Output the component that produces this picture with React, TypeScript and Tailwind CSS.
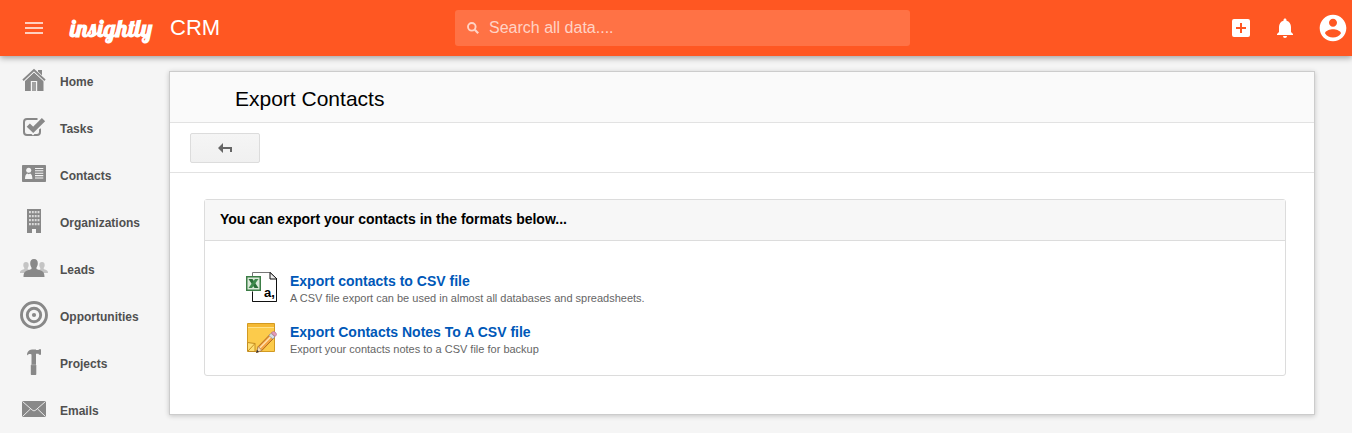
import type { ReactNode } from "react";

const Svg = ({ className, box = "0 0 24 24", children }: { className: string; box?: string; children: ReactNode }) => (
  <svg className={className} viewBox={box} fill="currentColor" aria-hidden="true">
    {children}
  </svg>
);

const HomeIcon = () => (
  <>
    <path d="M18 4h4v7l-4-4z" />
    <path d="M14 6.500 5 15v10h18.500V15z" />
    <path d="M3 14.300 14 4l11 10.300" fill="none" stroke="#f5f5f5" strokeWidth="3.200" />
    <path d="M3 14.300 14 4l11 10.300" fill="none" stroke="currentColor" strokeWidth="1.900" />
    <path d="M10.800 25V15h6.400v10" fill="#f5f5f5" />
    <path d="M12 25v-9h4v9z" fill="#a2a2a2" />
  </>
);

const TasksIcon = () => (
  <>
    <path
      d="M17.500 6H7a3 3 0 0 0-3 3v10a3 3 0 0 0 3 3h10a3 3 0 0 0 3-3v-3.500"
      fill="none"
      stroke="currentColor"
      strokeWidth="2"
    />
    <path d="m8 13.300 5 5L24 7.300" fill="none" stroke="#f5f5f5" strokeWidth="6" />
    <path d="m8.300 12.200 4.900 4.700L23.500 6.700" fill="none" stroke="currentColor" strokeWidth="4.600" />
  </>
);

const ContactsIcon = () => (
  <>
    <rect x="2" y="5" width="24" height="17" rx=".8" />
    <circle cx="8.700" cy="10.300" r="2.500" fill="#f5f5f5" />
    <path d="M5 19c0-3 .8-5 2.200-5.500l1.500.8 1.500-.8c1.400.5 2.200 2.500 2.200 5.500z" fill="#f5f5f5" />
    <path d="M15 8.500h8.300M15 10.800h8.300M15 13.200h8.300M15 15.600h8.300M15 18h8.300" stroke="#f5f5f5" strokeWidth="1.100" />
  </>
);

const OrganizationsIcon = () => (
  <>
    <path d="M7 2h14v24h-5v-4h-4v4H7z" />
    <path d="M9 5.200h10.500M9 9.200h10.500M9 13.200h10.500M9 17.200h10.500" stroke="#dadada" strokeWidth="2.200" strokeDasharray="1.900 .95" />
  </>
);

const LeadsIcon = () => (
  <>
    <g fill="#c4c4c4">
      <path d="M6 8c1.800 0 2.700 1.300 2.700 3.100 0 1.600-.5 2.300-1 3v1.200c1.600.8 4 1.200 4 3V19H0c0-2.300 1-2.800 4.300-4v-1c-.6-.7-1-1.400-1-2.900C3.300 9.300 4.200 8 6 8z" />
      <path d="M22 8c1.800 0 2.700 1.300 2.700 3.100 0 1.500-.4 2.200-1 2.900v1c3.300 1.200 4.300 1.700 4.300 4H16.300v-.7c0-1.800 2.400-2.200 4-3v-1.200c-.5-.7-1-1.400-1-3C19.300 9.300 20.200 8 22 8z" />
    </g>
    <path d="M14 5c2.700 0 3.800 1.700 3.800 4.300 0 2.200-.7 3.200-1.300 4.200V15c5.500 2 8 2 8 8h-21c0-6 2.500-6 8-8v-1.500c-.6-1-1.300-2-1.300-4.200C10.200 6.700 11.300 5 14 5z" />
  </>
);

const OpportunitiesIcon = () => (
  <>
    <circle cx="14" cy="14" r="12.500" fill="none" stroke="currentColor" strokeWidth="2.900" />
    <circle cx="14" cy="14" r="6.700" fill="none" stroke="currentColor" strokeWidth="2.900" />
    <circle cx="14" cy="14" r="2.100" />
  </>
);

const ProjectsIcon = () => (
  <>
    <path d="M7 7.500C7 3.500 9 2 12 1.500h4V2h2.500l.5-.8h2v5.600h-2l-.5-1H16V17h.3v9c0 .8-.4 1-1 1h-3.600c-.6 0-.9-.2-.9-1v-9h.7V6.500C9.500 5.600 8.500 6 7 7.500z" />
    <path d="M11 16.800h5" stroke="#b5b5b5" strokeWidth=".7" />
  </>
);

const EmailsIcon = () => (
  <>
    <rect x="2" y="6" width="24" height="16" rx=".8" />
    <path d="m2.500 6.500 9.700 8.500c1.200 1 2.400 1 3.600 0l9.700-8.500M2.500 21.500l8-7.600M25.500 21.500l-8-7.600" fill="none" stroke="#f5f5f5" strokeWidth=".9" />
  </>
);

const nav = [
  { label: "Home", Icon: HomeIcon },
  { label: "Tasks", Icon: TasksIcon },
  { label: "Contacts", Icon: ContactsIcon },
  { label: "Organizations", Icon: OrganizationsIcon },
  { label: "Leads", Icon: LeadsIcon },
  { label: "Opportunities", Icon: OpportunitiesIcon },
  { label: "Projects", Icon: ProjectsIcon },
  { label: "Emails", Icon: EmailsIcon },
];

const CsvIcon = () => (
  <svg className="size-8 shrink-0" viewBox="0 0 32 32" aria-hidden="true">
    <path d="M6.500.5h18l6 6v23h-24z" fill="#fff" stroke="#777" />
    <path d="M30.500 6v23.500h-24V20" fill="none" stroke="#111" />
    <path d="M24 .5v6.500h7z" fill="#eee" stroke="#111" />
    <rect x="0" y="4" width="15" height="15" fill="#3c7d46" />
    <rect x="1.500" y="5.500" width="12" height="12" fill="#dbe9d9" />
    <path d="M2.500 7h4l6 9h-4z" fill="#2b6e37" />
    <path d="M12.500 7h-3.500l-6.500 9H6z" fill="#3f8a4c" />
    <text x="18" y="25" fontFamily="Liberation Sans, sans-serif" fontWeight="700" fontSize="13" fill="#000">
      a,
    </text>
  </svg>
);

const NotesIcon = () => (
  <svg className="size-8 shrink-0" viewBox="0 2 32 32" aria-hidden="true">
    <path d="M1.500 2.500h27v28h-20l-7-7z" fill="#fccb4b" stroke="#d29a22" />
    <path d="M2 3h26v3H2z" fill="#f5b934" />
    <path d="M2 6.500h26" stroke="#ffe28a" />
    <path d="M1.500 21.500 9 22.500v8H1.500z" fill="#ffdf73" stroke="#c58e20" />
    <path d="m2 30 7-7.500" stroke="#c58e20" />
    <path d="m10.500 31.500 1.800-6L24.500 13l3.800 3.500-12.500 13z" fill="#f4a340" stroke="#a8621c" strokeWidth=".9" />
    <path d="m13.800 27 12.200-12.500" stroke="#ffe0ae" strokeWidth="1.500" />
    <path d="m10.500 31.500 1.800-6 3.500 4z" fill="#f6dfbd" stroke="#9a7448" strokeWidth=".6" />
    <path d="m10.200 31.800.9-3 1.900 1.900z" fill="#333" />
    <path d="m23 14.500 2-2.200 3.900 3.500-2 2.200z" fill="#d8dfe8" stroke="#8292aa" strokeWidth=".6" />
    <path d="m25.300 12 1-1c1.800-1.600 5.300 1.600 3.800 3.400l-1 1.100z" fill="#e39bbb" stroke="#aa6588" strokeWidth=".6" />
  </svg>
);

const exportsList = [
  {
    title: "Export contacts to CSV file",
    text: "A CSV file export can be used in almost all databases and spreadsheets.",
    Icon: CsvIcon,
  },
  {
    title: "Export Contacts Notes To A CSV file",
    text: "Export your contacts notes to a CSV file for backup",
    Icon: NotesIcon,
  },
];

function TopBar() {
  return (
    <header className="relative grid h-14 grid-cols-[455px_minmax(0,455px)_1fr] items-center bg-[#ff5722] text-white shadow-[0_2px_6px_rgba(0,0,0,0.35)]">
      <div className="flex items-center pl-[22px]">
        <button type="button" aria-label="Menu" className="text-[#ffd0c0]">
          <Svg className="size-6">
            <path d="M3 18h18v-2H3v2zm0-5h18v-2H3v2zm0-7v2h18V6H3z" />
          </Svg>
        </button>
        <a href="#home" className="flex items-center pl-6">
          <span className="w-[100px] font-['Lobster','Liberation_Serif',serif] text-[24px] leading-8 font-bold">insightly</span>
          <span className="text-[22px] leading-8">CRM</span>
        </a>
      </div>
      <label className="flex h-9 items-center gap-2.5 rounded-[3px] bg-[#ff7245] px-3 text-[#ffd3c5]">
        <Svg className="size-3" box="0 0 12 12">
          <circle cx="4.800" cy="4.800" r="3.800" fill="none" stroke="currentColor" strokeWidth="1.900" />
          <path d="m7.800 7.800 3.400 3.400" stroke="currentColor" strokeWidth="2.200" />
        </Svg>
        <input
          type="text"
          aria-label="Search all data"
          placeholder="Search all data...."
          className="min-w-0 flex-1 bg-transparent text-[16px] leading-6 text-white outline-none placeholder:text-[#ffd3c5]"
        />
      </label>
      <div className="flex items-center justify-end gap-5 pr-[3px]">
        <button type="button" aria-label="Add">
          <Svg className="size-6">
            <path d="M19 3H5a2 2 0 0 0-2 2v14a2 2 0 0 0 2 2h14a2 2 0 0 0 2-2V5a2 2 0 0 0-2-2zm-2 10h-4v4h-2v-4H7v-2h4V7h2v4h4v2z" />
          </Svg>
        </button>
        <button type="button" aria-label="Notifications">
          <Svg className="size-6">
            <path d="M12 22c1.100 0 2-.9 2-2h-4a2 2 0 0 0 2 2zm6-6v-5c0-3.070-1.640-5.640-4.500-6.320V4c0-.83-.67-1.500-1.500-1.500s-1.500.67-1.500 1.500v.68C7.630 5.360 6 7.920 6 11v5l-2 2v1h16v-1l-2-2z" />
          </Svg>
        </button>
        <button type="button" aria-label="Account">
          <Svg className="size-8">
            <path d="M12 2C6.480 2 2 6.480 2 12s4.480 10 10 10 10-4.480 10-10S17.520 2 12 2zm0 3c1.660 0 3 1.340 3 3s-1.340 3-3 3-3-1.340-3-3 1.340-3 3-3zm0 14.200a7.200 7.200 0 0 1-6-3.220c.03-1.990 4-3.080 6-3.080 1.990 0 5.970 1.090 6 3.080a7.200 7.200 0 0 1-6 3.220z" />
          </Svg>
        </button>
      </div>
    </header>
  );
}

export default function App() {
  return (
    <div className="bg-[#f5f5f5] font-['Liberation_Sans',Arial,sans-serif]">
      <TopBar />
      <div className="flex items-start">
        <nav className="w-[169px] shrink-0 pt-2.5 pb-1.5 pl-5">
          <ul className="flex flex-col gap-[15px]">
            {nav.map(({ label, Icon }) => (
              <li key={label}>
                <a href={"#" + label.toLowerCase()} className="flex h-8 gap-3 text-[12px] leading-8 font-bold text-[#505050]">
                  <Svg className="size-7 text-[#888]" box="0 0 28 28">
                    <Icon />
                  </Svg>
                  {label}
                </a>
              </li>
            ))}
          </ul>
        </nav>
        <main className="mt-[15px] mr-[37px] min-w-0 flex-1 border border-[#ccc] bg-white shadow-[0_1px_5px_rgba(0,0,0,0.2)]">
          <div className="border-b border-[#e2e2e2] bg-[#fafafa] pt-[13px] pb-[9px] pl-[65px]">
            <h1 className="text-[21px] leading-7 text-black">Export Contacts</h1>
          </div>
          <div className="border-b border-[#e2e2e2] px-5 pt-2.5 pb-[9px]">
            <button
              type="button"
              aria-label="Back"
              className="flex h-[30px] w-[70px] items-center justify-center rounded-[2px] border border-[#dcdcdc] bg-linear-to-b from-[#f5f5f5] to-[#f0f0f0] text-[#666]"
            >
              <Svg className="h-2.5 w-3.5" box="0 0 14 10">
                <path d="M0 5 5 0v4h9v5h-2V6H5v4z" />
              </Svg>
            </button>
          </div>
          <div className="pt-[26px] pr-7 pb-[38px] pl-[34px]">
            <section className="rounded-[3px] border border-[#dcdcdc]">
              <h2 className="border-b border-[#dcdcdc] bg-[#f7f7f7] px-[15px] pt-[9px] pb-[11px] text-[14px] leading-5 font-bold text-black">
                You can export your contacts in the formats below...
              </h2>
              <ul className="flex flex-col gap-[17px] pt-[31px] pr-4 pb-[18px] pl-[41px]">
                {exportsList.map(({ title, text, Icon }) => (
                  <li key={title} className="flex gap-3">
                    <Icon />
                    <div>
                      <a href="#export" className="block text-[14px] leading-[18px] font-bold text-[#0058b8]">
                        {title}
                      </a>
                      <p className="text-[11px] leading-4 text-[#666]">{text}</p>
                    </div>
                  </li>
                ))}
              </ul>
            </section>
          </div>
        </main>
      </div>
    </div>
  );
}
